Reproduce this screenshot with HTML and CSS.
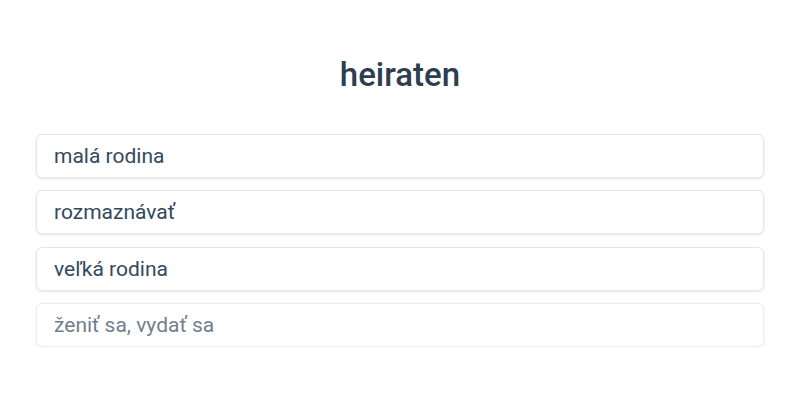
FILE: index.html
```html
<!DOCTYPE html>
<html lang="sk">
<head>
<meta charset="utf-8">
<link rel="stylesheet" href="styles.css">
</head>
<body>
<main class="quiz">
  <h1 class="word">heiraten</h1>
  <div class="options">
    <div class="option">malá rodina</div>
    <div class="option">rozmaznávať</div>
    <div class="option">veľká rodina</div>
    <div class="option faded">ženiť sa, vydať sa</div>
  </div>
</main>
</body>
</html>
```
FILE: styles.css
```css
html, body {
  margin: 0;
  padding: 0;
  background: #fff;
  font-family: Roboto, "Noto Sans", sans-serif;
  color: #2c3e50;
}
.quiz {
  padding: 55px 36px 0;
}
.word {
  margin: 0 0 39px;
  text-align: center;
  font-size: 33px;
  font-weight: 500;
  line-height: 40px;
  color: #2c3e50;
}
.options {
  display: flex;
  flex-direction: column;
  gap: 12.4px;
}
.option {
  height: 44px;
  box-sizing: border-box;
  border: 1px solid #e6e6e6;
  border-radius: 6px;
  box-shadow: 0 1px 3px rgba(0,0,0,0.1);
  padding: 0 17px;
  display: flex;
  align-items: center;
  font-size: 21px;
  color: #34495e;
  background: #fff;
}
.option.faded {
  opacity: 0.7;
}
```
